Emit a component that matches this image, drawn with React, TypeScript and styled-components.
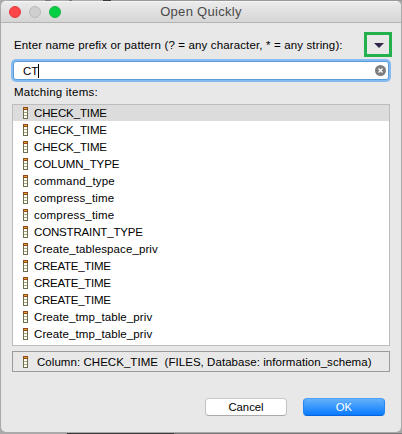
import React from 'react';
import styled, { createGlobalStyle } from 'styled-components';

const GlobalStyle = createGlobalStyle`
  * { box-sizing: border-box; }
  body { margin: 0; background: #b5b5b5; overflow: hidden; }
`;

const Desktop = styled.div`
  width: 402px;
  height: 434px;
  padding: 1px 1px 2px;
  background:
    linear-gradient(90deg, #aaa 0 67px, #393939 67px 174px, #777 174px) 0 433px / 402px 1px no-repeat,
    linear-gradient(90deg, #aaa 0 45px, #777 45px 51px, #aaa 51px 69px, #777 69px 72px, #aaa 72px 103px, #383838 103px 111px, #999 111px) 0 0 / 402px 1px no-repeat,
    #a9a9a9;
  font-family: 'Liberation Sans', Arial, sans-serif;
  font-size: 11.5px;
  color: #000;
`;

const Dialog = styled.div`
  display: flex;
  flex-direction: column;
  height: 431px;
  border-radius: 5px;
  background: #e8e8e8;
  overflow: hidden;
`;

const TitleBar = styled.header`
  display: grid;
  grid-template-columns: 60px 1fr 60px;
  align-items: center;
  height: 22px;
  flex: none;
  padding-left: 8px;
  padding-right: 8px;
  border-top: 1px solid #f5f5f5;
  border-bottom: 1px solid #b3b3b3;
  background: linear-gradient(#ebebeb, #d5d5d5);
`;

const Lights = styled.div`
  display: flex;
  gap: 8px;
`;

const Light = styled.span<{ $fill: string; $edge: string }>`
  width: 12px;
  height: 12px;
  border-radius: 50%;
  background: ${(p) => p.$fill};
  border: 1px solid ${(p) => p.$edge};
`;

const Title = styled.h1`
  margin: 0;
  text-align: center;
  font-size: 13px;
  line-height: 20px;
  font-weight: 400;
  color: #4a4a4a;
`;

const Text = styled.span<{ $spacing?: number }>`
  white-space: pre;
  letter-spacing: ${(p) => p.$spacing ?? 0}px;
`;

const PromptRow = styled.div`
  display: flex;
  align-items: center;
  justify-content: space-between;
  height: 25px;
  flex: none;
  margin: 9px 9px 0 13px;
`;

const MenuButton = styled.button`
  display: flex;
  align-items: center;
  justify-content: center;
  width: 28px;
  height: 25px;
  padding: 2px 0 0 1px;
  border: 3px solid #22b14c;
  background: transparent;
`;

const SearchField = styled.div`
  display: flex;
  align-items: center;
  height: 19px;
  flex: none;
  margin: 4px 12px 0;
  padding: 0 2px 0 9px;
  border: 1px solid #5a9bd8;
  border-radius: 3px;
  background: #fff;
  box-shadow: 0 0 0 2px #86bbf2;
`;

const Caret = styled.span`
  width: 1px;
  height: 14px;
  background: #000;
`;

const ClearButton = styled.button`
  display: flex;
  margin-left: auto;
  padding: 0;
  border: 0;
  background: transparent;
`;

const ListLabel = styled.div`
  height: 24px;
  flex: none;
  padding: 6px 0 0 13px;
  line-height: 13px;
`;

const List = styled.ul`
  height: 242px;
  flex: none;
  margin: 0 11px;
  padding: 0;
  border: 1px solid #bcbcbc;
  background: #fff;
  list-style: none;
`;

const Item = styled.li<{ $selected: boolean }>`
  display: flex;
  align-items: center;
  gap: 6px;
  height: 17px;
  padding-left: 10px;
  line-height: 14px;
  background: ${(p) => (p.$selected ? '#dcdcdc' : '#fff')};

  &:first-child {
    height: 16px;
  }
`;

const Status = styled.div`
  display: flex;
  align-items: center;
  gap: 9px;
  height: 21px;
  flex: none;
  margin: 5px 11px 0;
  padding-left: 10px;
  border: 1px solid #9b9b9b;
`;

const Actions = styled.footer`
  display: flex;
  justify-content: flex-end;
  gap: 16px;
  margin: 26px 16px 0;
`;

const Button = styled.button<{ $primary?: boolean }>`
  width: 82px;
  height: 18px;
  padding: 0;
  border: 1px solid;
  border-color: ${(p) => (p.$primary ? '#4ba0f7 #2286f5 #0864dc' : '#cacaca #c2c2c2 #aaa')};
  border-radius: 4px;
  background: ${(p) => (p.$primary ? 'linear-gradient(#65b2fb, #097aff)' : '#fff')};
  color: ${(p) => (p.$primary ? '#fff' : '#000')};
  font: 11.3px/15px 'Liberation Sans', Arial, sans-serif;
`;

const ColumnIcon = () => (
  <svg width="5" height="12" viewBox="0 0 5 12" shapeRendering="crispEdges">
    <path fill="#6d6d52" d="M0 0h5v12H0z" />
    <path fill="#8b4a1b" d="M0 0h5v3H0z" />
    <path fill="#eea02f" d="M1 1h3v1H1z" />
    <path fill="#fffff0" d="M1 3h3v2H1zM1 6h3v2H1zM1 9h3v2H1z" />
    <path fill="#a3a387" d="M1 5h3v1H1zM1 8h3v1H1z" />
  </svg>
);

const items: { name: string; spacing: number }[] = [
  { name: 'CHECK_TIME', spacing: -0.12 },
  { name: 'CHECK_TIME', spacing: -0.12 },
  { name: 'CHECK_TIME', spacing: -0.12 },
  { name: 'COLUMN_TYPE', spacing: -0.08 },
  { name: 'command_type', spacing: 0.19 },
  { name: 'compress_time', spacing: 0.19 },
  { name: 'compress_time', spacing: 0.19 },
  { name: 'CONSTRAINT_TYPE', spacing: -0.16 },
  { name: 'Create_tablespace_priv', spacing: 0.11 },
  { name: 'CREATE_TIME', spacing: -0.27 },
  { name: 'CREATE_TIME', spacing: -0.27 },
  { name: 'CREATE_TIME', spacing: -0.27 },
  { name: 'Create_tmp_table_priv', spacing: 0.09 },
  { name: 'Create_tmp_table_priv', spacing: 0.09 },
];

export default function App() {
  return (
    <Desktop>
      <GlobalStyle />
      <Dialog role="dialog" aria-label="Open Quickly">
        <TitleBar>
          <Lights>
            <Light $fill="#fc4748" $edge="#e33b3e" />
            <Light $fill="#cfcfcf" $edge="#b9b9b9" />
            <Light $fill="#05cf43" $edge="#13b642" />
          </Lights>
          <Title><Text $spacing={0.3}>Open Quickly</Text></Title>
        </TitleBar>
        <PromptRow>
          <Text $spacing={0.14}>Enter name prefix or pattern (? = any character, * = any string):</Text>
          <MenuButton aria-label="Menu">
            <svg width="10" height="5" viewBox="0 0 10 5">
              <path fill="#33264c" d="M0 0h10L5 5z" />
            </svg>
          </MenuButton>
        </PromptRow>
        <SearchField>
          <Text $spacing={0}>CT</Text>
          <Caret />
          <ClearButton aria-label="Clear">
            <svg width="11" height="11" viewBox="0 0 11 11">
              <circle cx="5.5" cy="5.5" r="5.5" fill="#7d7d7d" />
              <path d="M3.5 3.5l4 4m0-4l-4 4" stroke="#fff" strokeWidth="1.4" />
            </svg>
          </ClearButton>
        </SearchField>
        <ListLabel><Text $spacing={0.22}>Matching items:</Text></ListLabel>
        <List>
          {items.map((item, index) => (
            <Item key={index} $selected={index === 0}>
              <ColumnIcon />
              <Text $spacing={item.spacing}>{item.name}</Text>
            </Item>
          ))}
        </List>
        <Status>
          <ColumnIcon />
          <Text $spacing={0.05}>Column: CHECK_TIME  (FILES, Database: information_schema)</Text>
        </Status>
        <Actions>
          <Button>Cancel</Button>
          <Button $primary>OK</Button>
        </Actions>
      </Dialog>
    </Desktop>
  );
}
